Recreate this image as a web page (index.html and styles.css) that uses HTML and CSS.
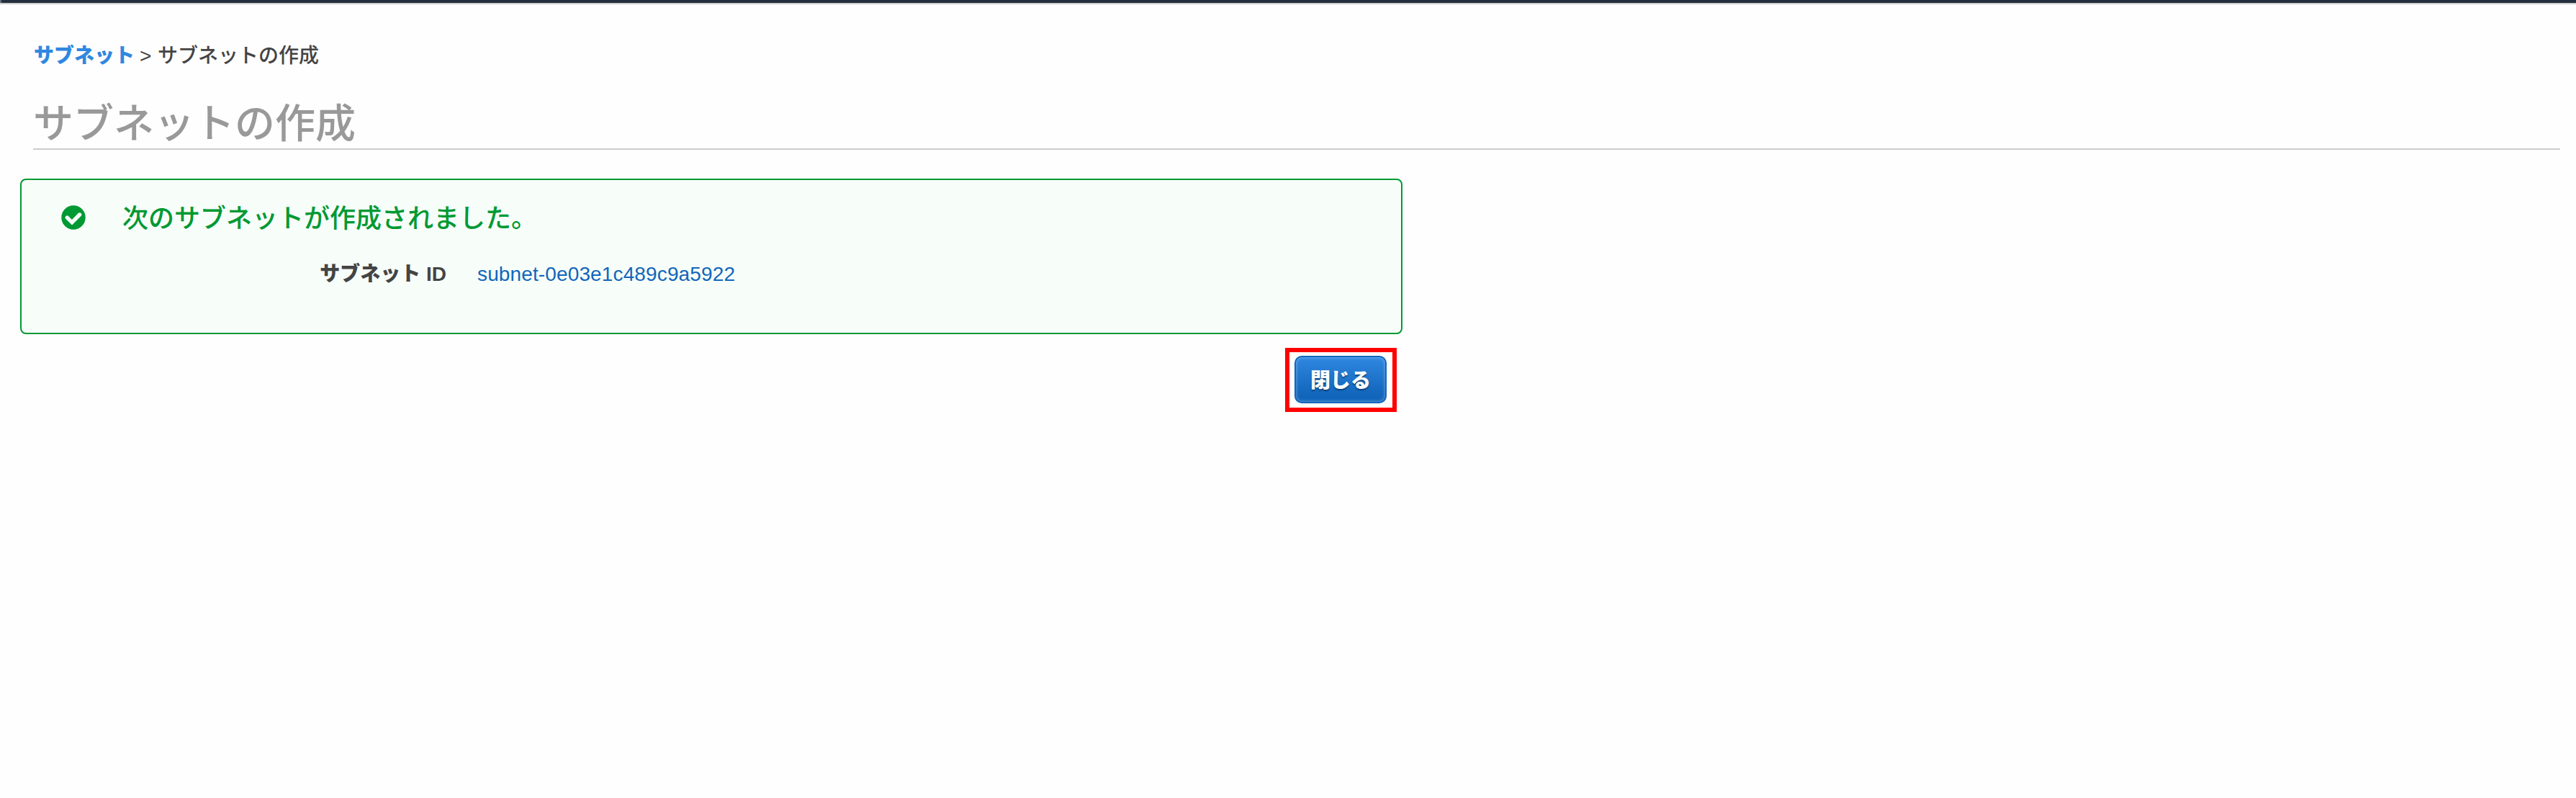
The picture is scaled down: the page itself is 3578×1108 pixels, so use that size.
FILE: index.html
```html
<!DOCTYPE html>
<html lang="ja">
<head>
<meta charset="utf-8">
<title>サブネットの作成</title>
<link rel="stylesheet" href="styles.css">
</head>
<body>
<div class="topbar"></div>
<header class="page-header">
  <nav class="breadcrumb"><a class="crumb-link" href="#">サブネット</a><span class="separator">&gt;</span><span>サブネットの作成</span></nav>
  <h1 class="title">サブネットの作成</h1>
</header>
<main class="content">
  <section class="notice">
    <div class="notice-head">
      <svg class="notice-icon" viewBox="0 0 34 34"><circle cx="17" cy="17" r="16.7" fill="#093"/><path d="M8.3 17.2 15 23.8 25.6 13" fill="none" stroke="#f7fdf9" stroke-width="5.4" stroke-linecap="round" stroke-linejoin="miter"/></svg>
      <h2 class="notice-text">次のサブネットが作成されました。</h2>
    </div>
    <dl class="details">
      <dt class="label">サブネット ID</dt>
      <dd class="value"><a class="value-link" href="#">subnet-0e03e1c489c9a5922</a></dd>
    </dl>
  </section>
  <div class="actions">
    <div class="highlight"><button class="button" type="button">閉じる</button></div>
  </div>
</main>
</body>
</html>
```
FILE: styles.css
```css
* { box-sizing: border-box; }
body {
  margin: 0;
  min-height: 1108px;
  background: #fefefe;
  color: #444;
  font: 28px/40px "Liberation Sans", "Noto Sans CJK JP", sans-serif;
}
a { text-decoration: none; }
.topbar {
  height: 6px;
  background: linear-gradient(90deg, #626d7c 2px, #232f3e 2px);
  border-bottom: 2px solid #ccc;
}
.page-header {
  margin: 0 22px 0 46px;
  height: 202px;
  padding: 52px 0 0 1px;
  border-bottom: 2px solid #ccc;
}
.breadcrumb { display: flex; height: 40px; white-space: nowrap; font-weight: 500; }
.crumb-link { width: 140px; color: #3087e0; font-weight: 900; }
.separator { width: 32px; padding-left: 7px; }
.title {
  margin: 34px 0 0 -1px;
  color: #999;
  font-size: 56px;
  font-weight: 500;
  line-height: 80px;
}
.content { width: 1920px; margin: 40px 0 0 28px; }
.notice {
  height: 216px;
  padding: 28px 0 0 56px;
  border: 2px solid #093;
  border-radius: 8px;
  background: #f7fdf9;
}
.notice-head { display: flex; align-items: center; gap: 51px; height: 48px; }
.notice-icon { width: 34px; height: 34px; margin-left: -1px; }
.notice-text { margin: 0; padding-top: 3px; color: #093; font-size: 36px; font-weight: 500; line-height: 48px; }
.details { display: flex; margin: 35px 0 0; }
.label { width: 534px; text-align: right; font-weight: 900; }
.value { margin: 0 0 0 43px; }
.value-link { color: #1166bb; letter-spacing: .13px; }
.actions { display: flex; justify-content: flex-end; padding: 19px 8px 0 0; }
.highlight { width: 155px; height: 89px; padding: 5px 8px 6px 7px; border: 6px solid #f00; }
.button {
  display: block;
  width: 128px;
  height: 66px;
  padding: 3px 0 0;
  border: 2px solid #1166bb;
  border-radius: 10px;
  background: linear-gradient(#3087e0, #1166bb 85%);
  box-shadow: inset 0 0 4px rgba(255, 255, 255, .45);
  color: #fff;
  font: 900 28px/58px "Liberation Sans", "Noto Sans CJK JP", sans-serif;
  text-shadow: 0 2px 2px rgba(0, 0, 0, .4);
}
```
